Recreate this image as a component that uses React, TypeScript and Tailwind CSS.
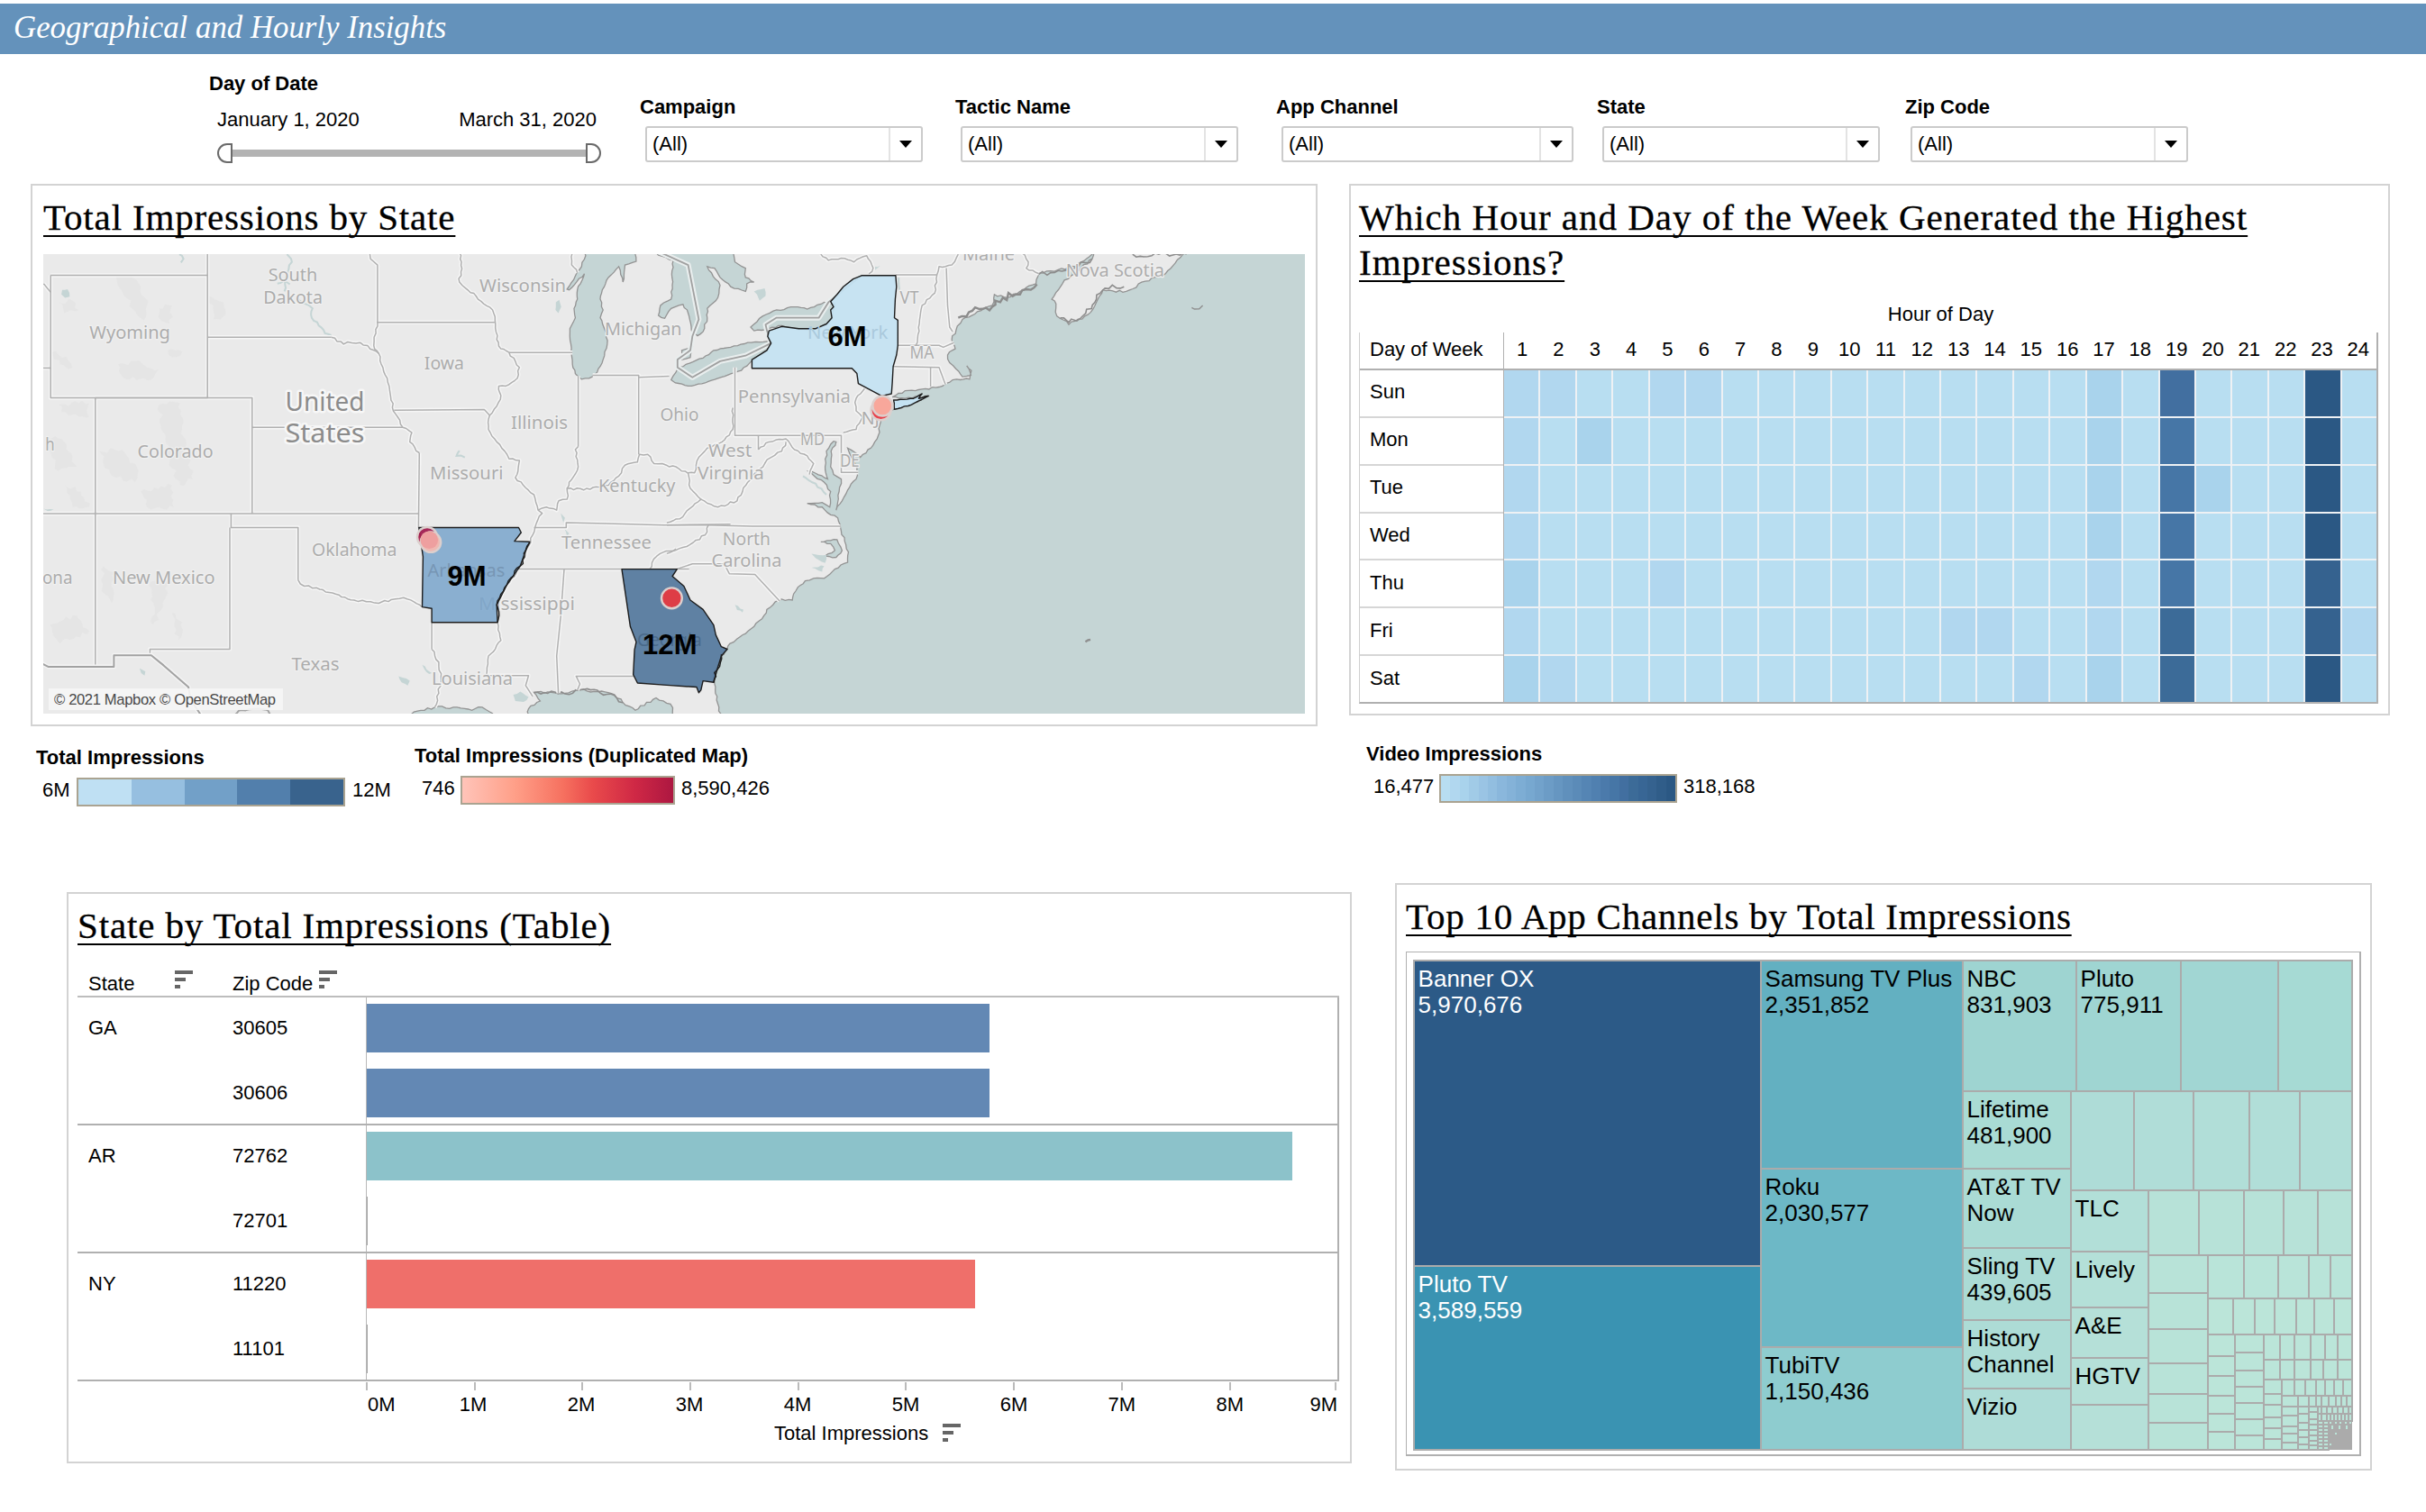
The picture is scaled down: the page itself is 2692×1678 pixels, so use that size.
import React from "react";

const SANS = "font-['Liberation_Sans',Arial,sans-serif]";
const SERIF = "font-['Liberation_Serif','Times_New_Roman',serif]";

/* ---------- shared pieces ---------- */

function Title({ tracking, children }: { tracking: string; children: React.ReactNode }) {
  return (
    <h2
      className={`${SERIF} ${tracking} text-[41px] leading-[50px] text-black whitespace-nowrap underline decoration-2 underline-offset-[6px] [text-decoration-skip-ink:none] [-webkit-text-stroke:0.3px_black]`}
    >
      {children}
    </h2>
  );
}

function SortIcon() {
  return (
    <svg width="20" height="20" viewBox="0 0 20 20" fill="#666" shapeRendering="crispEdges">
      <rect width="20" height="4" />
      <rect y="8" width="12" height="4" />
      <rect y="16" width="6" height="4" />
    </svg>
  );
}

function Filter({ label, width, box }: { label: string; width: string; box: string }) {
  return (
    <div className={`${width} shrink-0 pt-[46px]`}>
      <div className="font-bold leading-[26px]">{label}</div>
      <div className={`${box} ml-1.5 mt-[8px] flex h-10 rounded-[3px] border-2 border-[#cbcbcb] bg-white`}>
        <span className="flex-1 pl-[6px] leading-[36px]">(All)</span>
        <span className="flex w-[36px] items-center justify-center border-l-2 border-[#e3e3e3]">
          <svg width="14" height="8" viewBox="0 0 14 8">
            <path d="M0 0h14L7 8z" />
          </svg>
        </span>
      </div>
    </div>
  );
}

/* ---------- map ---------- */

type Side = "L" | "R";
type Pt = [number, number];

const project = (side: Side, u: number, v: number): Pt =>
  side === "L" ? [u / 2.1778 - 18, v / 2.9037 - 12] : [u / 2.119 + 692, v / 2.9037 - 12];

const noise = (n: number) => {
  const s = Math.sin(n * 127.1 + 11.7) * 43758.5453;
  return (s - Math.floor(s)) * 2 - 1;
};

function outline(side: Side, text: string, rough = 0, closed = false) {
  const pts = text.trim().split(/\s+/).map((p) => {
    const [u, v] = p.split(",").map(Number);
    return project(side, u, v);
  });
  if (closed) pts.push(pts[0]);
  const out: Pt[] = [pts[0]];
  for (let i = 1; i < pts.length; i++) {
    const [ax, ay] = pts[i - 1];
    const [bx, by] = pts[i];
    const len = Math.hypot(bx - ax, by - ay);
    const steps = rough ? Math.max(1, Math.round(len / 4)) : 1;
    for (let k = 1; k <= steps; k++) {
      const t = k / steps;
      const edge = k === steps ? 0 : 1;
      const off = rough * noise(ax * 1.3 + ay * 0.7 + k * 3.1) * edge;
      out.push([ax + (bx - ax) * t - ((by - ay) / (len || 1)) * off, ay + (by - ay) * t + ((bx - ax) / (len || 1)) * off]);
    }
  }
  return "M" + out.map(([x, y]) => `${x.toFixed(1)},${y.toFixed(1)}`).join("L") + (closed ? "Z" : "");
}

const WATER: [Side, string, number][] = [
  ["R", "127,1530 118,1460 112,1420 110,1395 120,1360 128,1330 142,1308 148,1290 165,1275 185,1258 205,1235 228,1200 235,1180 255,1155 270,1147 295,1150 298,1130 308,1108 325,1088 345,1080 370,1080 395,1050 425,1028 427,995 418,960 408,915 402,885 385,875 365,850 330,838 365,835 383,850 385,800 370,770 333,735 378,760 372,720 375,670 392,638 398,640 386,670 385,720 392,745 410,760 405,800 398,860 412,830 425,795 445,760 447,735 440,700 425,660 455,690 485,650 497,620 503,575 505,545 535,535 575,520 617,492 560,500 530,495 560,475 600,470 640,463 655,452 672,440 690,440 712,438 716,410 705,395 715,425 695,430 680,405 665,385 660,360 678,340 670,310 680,280 695,245 730,220 765,200 770,165 800,175 830,155 868,130 875,95 920,85 960,75 1000,35 1010,-10 1540,-10 1540,1530", 1.2],
  ["L", "1345,20 1350,40 1335,85 1305,148 1310,150 1347,98 1330,150 1330,180 1322,210 1325,240 1312,275 1315,350 1318,390 1325,420 1340,438 1358,435 1378,415 1392,375 1402,325 1400,290 1385,240 1392,215 1385,180 1390,150 1405,110 1430,75 1440,125 1445,70 1472,58 1470,20", 0.8],
  ["R", "-40,20 -20,38 15,55 10,180 -15,200 -20,232 -5,242 10,210 38,197 50,225 60,290 72,298 85,285 95,240 95,210 120,175 125,135 95,75 112,80 125,110 150,140 185,155 188,130 205,125 185,110 185,80 160,60 155,20", 1],
  ["R", "35,345 60,335 55,368 35,375", 0.4],
  ["R", "10,440 25,405 45,390 85,370 110,345 150,335 190,320 245,318 235,345 200,378 175,410 120,435 90,450 50,460 20,450", 0.7],
  ["R", "197,270 225,235 250,218 300,205 330,212 370,190 395,195 388,245 375,262 355,275 310,278 270,265 240,275 205,282", 0.8],
  ["L", "925,1530 935,1510 985,1495 1030,1495 1075,1505 1100,1495 1118,1510 1135,1530", 1.5],
  ["L", "1212,1530 1212,1500 1240,1475 1225,1447 1300,1450 1335,1440 1380,1445 1420,1455 1440,1480 1470,1505 1520,1465 1555,1485 1560,1510 1565,1530", 1.5],
  ["R", "362,962 400,955 412,990 398,1012 372,1008 395,990 385,968", 0.8],
];

const PONDS: [Side, string][] = [
  ["L", "85,150 98,148 103,172 92,176 83,165"],
  ["L", "1278,190 1286,182 1291,205 1284,225 1277,215"],
  ["L", "1175,1455 1192,1445 1212,1462 1200,1478 1180,1475"],
  ["L", "955,1358 978,1385 972,1388 960,1372"],
  ["L", "898,1395 925,1410 920,1425 905,1415"],
  ["L", "272,1370 286,1380 284,1393 276,1385"],
  ["L", "1290,870 1300,885 1296,900"],
  ["L", "1298,918 1310,935 1305,945"],
  ["L", "40,855 64,858 50,863"],
  ["R", "205,155 230,145 232,170 218,185 212,165"],
  ["R", "160,1165 180,1180 178,1190 165,1182"],
  ["R", "340,1000 375,1005 372,1030 350,1015"],
  ["R", "340,1045 370,1040 365,1058"],
  ["R", "487,75 502,72 490,86"],
];

const RIVERS: [Side, string][] = [
  ["L", "628,35 640,60 632,85 625,110 622,155"],
  ["L", "605,130 620,122 635,132"],
  ["L", "655,180 672,195 690,210 688,240 705,265 720,290 735,296"],
  ["L", "1045,668 1038,685 1058,690"],
  ["L", "368,35 378,50 372,62"],
  ["R", "320,750 350,775 375,810"],
  ["R", "545,110 547,150"],
];

const STRAIGHT: [Side, string][] = [
  ["L", "57,103 436,103 436,498 57,498 57,103"],
  ["L", "436,30 436,103"],
  ["L", "40,130 57,158"],
  ["L", "30,402 57,402"],
  ["L", "165,1365 165,498 544,498 544,871"],
  ["L", "30,871 946,871"],
  ["L", "436,303 735,303"],
  ["L", "544,593 908,593"],
  ["L", "948,675 946,916"],
  ["L", "828,30 830,50 847,70 847,255"],
  ["L", "845,255 1130,255"],
  ["L", "887,538 1105,536 1118,555"],
  ["L", "1165,352 1318,352"],
  ["L", "1332,428 1332,655"],
  ["L", "1367,425 1478,425 1478,680"],
  ["L", "1478,432 1552,428"],
  ["L", "1225,916 1303,916 1303,900 1400,903 1540,908 1700,905"],
  ["L", "1180,1050 1600,1050"],
  ["L", "493,871 493,916 655,916 655,1085"],
  ["L", "490,916 490,1308 297,1308 297,1325"],
  ["L", "978,1222 978,1308"],
  ["L", "1110,1393 1212,1393 1205,1425 1222,1460"],
  ["L", "1298,1050 1290,1200 1280,1330 1284,1450"],
  ["L", "1330,1440 1336,1420 1327,1395 1470,1395"],
  ["R", "160,400 160,619 410,619 410,738 450,738"],
  ["R", "0,908 95,908 200,912 408,912"],
  ["R", "22,1050 60,1033 135,1033 147,1065 207,1067 265,1153"],
  ["R", "540,329 640,329 650,335 675,320"],
  ["R", "532,397 640,400 655,455"],
  ["R", "620,400 620,462"],
  ["R", "657,80 660,200 665,270 672,285"],
  ["R", "538,102 635,102"],
  ["R", "215,619 215,665"],
];

const WINDING: [Side, string][] = [
  ["L", "735,303 765,325 775,318 805,320 838,345 850,355 860,400 875,460 885,540 908,593 930,610 925,640 948,675"],
  ["L", "847,255 843,290 838,330 850,355"],
  ["L", "1045,30 1050,60 1045,125 1060,145 1085,170 1125,215 1132,260 1135,310 1145,340 1165,352 1190,400 1185,435 1165,455 1140,460 1145,490 1135,525 1118,555 1115,600 1135,640 1160,680 1165,695 1190,700 1180,755 1225,810 1235,860 1245,870 1230,905 1222,940 1212,975 1190,1045 1160,1100 1135,1170 1137,1222 1145,1280 1115,1330 1110,1393"],
  ["L", "1332,655 1325,665 1332,720 1310,770 1305,790"],
  ["L", "1235,860 1255,850 1280,860 1285,830 1305,825 1305,790 1345,795 1375,785 1405,780 1430,750 1445,715 1475,705 1480,680 1500,680 1515,710 1545,715 1568,720 1598,742"],
  ["L", "655,1085 670,1105 700,1110 730,1125 760,1140 790,1150 820,1155 850,1160 880,1148 910,1142 935,1155 955,1172"],
  ["L", "978,1308 995,1350 1000,1400 995,1450 985,1495"],
  ["L", "1505,1050 1510,1030 1530,1000 1568,985"],
  ["L", "1318,30 1316,70 1330,95"],
  ["R", "155,530 155,600 130,640 95,660 75,690 65,740 50,740 55,790 80,825 30,888 0,900"],
  ["R", "80,825 120,850 165,830 190,770 230,710 245,690 270,670 280,640"],
  ["R", "215,665 240,640 280,630 300,665 330,685 345,710 335,745"],
  ["R", "98,908 90,940 55,970 20,990 0,1000"],
  ["R", "465,468 445,500 445,540 460,560 445,600 415,610"],
  ["R", "635,102 630,160 600,200 585,330"],
  ["R", "635,102 640,75 670,70 685,35"],
  ["R", "362,35 380,55 410,48 440,60 470,40 485,80 475,98"],
  ["R", "830,20 850,60 845,80 875,98"],
];

const BORDERS: [Side, string][] = [
  ["R", "-30,20 50,70 75,245 60,300 55,345 25,375 25,400 60,432 125,380 185,362 245,322 235,280 232,262 257,240 357,240 380,190 458,104"],
];

const MEXICO = "30,1350 52,1365 210,1365 210,1328 300,1328 330,1360 360,1395 390,1430 395,1470 420,1520";

const RELIEF: string[] = [
  "215,110 250,105 275,140 290,200 285,260 262,220 235,170",
  "75,190 110,185 125,215 90,225",
  "320,210 350,200 345,260 325,250",
  "220,390 260,380 290,400 320,405 300,440 230,430",
  "60,350 95,365 110,400 80,390",
  "340,345 375,350 370,362 342,360",
  "75,520 150,515 150,560 100,555",
  "320,520 370,515 375,600 390,690 400,760 370,780 345,700 330,610",
  "175,670 230,665 265,720 260,770 200,740",
  "50,620 90,640 120,720 75,735 60,690",
  "90,780 130,800 150,850 110,850",
  "275,800 350,780 355,850 290,850",
  "185,1040 210,1060 205,1160 180,1120",
  "300,1090 345,1080 325,1180 305,1230",
  "55,1230 120,1200 150,1250 80,1290",
  "350,1190 375,1220 365,1280",
  "440,170 475,190 480,230 450,245",
];

const NY = "458,104 538,104 540,140 537,180 535,240 543,248 543,329 540,360 532,397 530,450 528,485 505,492 450,452 447,420 435,403 200,403 200,375 235,345 245,322 237,300 240,282 270,268 310,275 350,275 375,260 388,240 385,215 392,205 385,188 400,165 415,140 438,115";
const LONG_ISLAND = "533,505 580,500 600,485 592,500 615,492 575,520 535,535";
const AR = "947,916 1188,916 1194,932 1178,960 1215,962 1205,990 1192,1040 1160,1100 1135,1165 1137,1222 978,1222 978,1177 955,1172 957,1010";
const GA = "-106,1050 24,1050 13,1073 40,1105 55,1150 85,1180 110,1230 115,1262 128,1300 142,1308 128,1330 118,1375 110,1415 85,1410 80,1440 75,1448 70,1430 0,1424 -69,1417 -79,1390 -76,1310 -72,1285 -86,1235";
const NOVA_SCOTIA = "1015,-10 1000,50 950,105 930,130 905,180 915,195 917,235 945,262 990,230 1010,190 1025,150 1080,155 1140,112 1165,105 1190,72 1225,20 1230,-10";

// [text, left, right, baseline]
const LABELS: [string, number, number, number][] = [
  ["South", 249.7, 304.3, 30],
  ["Dakota", 244.2, 309.9, 54.5],
  ["Wisconsin", 484, 580, 41.7],
  ["Wyoming", 51.3, 140.9, 94],
  ["Michigan", 623, 708.5, 90],
  ["Iowa", 422.8, 466.9, 127.5],
  ["Illinois", 519, 582, 193.6],
  ["h", 2.2, 12.6, 217.7],
  ["Colorado", 104.6, 188.6, 225.6],
  ["Missouri", 429, 510.5, 249.7],
  ["Kentucky", 616, 701.5, 263.9],
  ["Tennessee", 575, 675, 327.2],
  ["Oklahoma", 298, 392.5, 335],
  ["ona", -1, 32.5, 365.5],
  ["New Mexico", 77, 190.5, 365.5],
  ["Mississippi", 483, 590, 395.4],
  ["Texas", 275.4, 328.7, 462],
  ["Louisiana", 431, 521, 478.4],
  ["Ohio", 684.5, 727.4, 185],
  ["Maine", 1020, 1078, 6.6],
  ["Nova Scotia", 1134.7, 1244, 24.5],
  ["VT", 950.6, 971.4, 55.2],
  ["MA", 961.5, 988.4, 115.8],
  ["Pennsylvania", 770.8, 895.9, 165],
  ["NJ", 907.7, 928, 188.8],
  ["MD", 840, 867, 212.2],
  ["DE", 884, 905.8, 236.3],
  ["West", 738, 786.4, 224.9],
  ["Virginia", 726, 800, 249.7],
  ["North", 753.8, 807, 322.7],
  ["Carolina", 741.6, 819.4, 347.2],
];

// Names of the highlighted states, faint over their fills.
const STATE_LABELS: [string, number, number, number, string][] = [
  ["Arkansas", 426.5, 512.3, 358, "#7796b4"],
  ["Georgia", 659, 730.7, 435, "#4a6a8a"],
  ["New York", 848, 937.4, 93.7, "#aac9dc"],
];

function UsMap() {
  return (
    <svg width="1400" height="510" viewBox="0 0 1400 510" className="block overflow-hidden">
      <rect width="1400" height="510" fill="#eaeaea" />
      {RELIEF.map((p) => (
        <path key={p} d={outline("L", p, 3, true)} fill="#e5e5e5" />
      ))}
      {WATER.map(([s, p, r]) => (
        <path key={p} d={outline(s, p, r, true)} fill="#c5d5d5" stroke="#939393" strokeWidth="1.3" />
      ))}
      <path d={outline("R", NOVA_SCOTIA, 1.6, true)} fill="#eaeaea" stroke="#939393" strokeWidth="1.3" />
      <path d={outline("R", "685,240 710,222 735,212 765,205 772,185 790,175 820,165 845,148 870,132", 4)} fill="none" stroke="#8c8c8c" strokeWidth="2.4" />
      <path d={outline("R", "925,240 945,255 985,225 1010,180 1030,145 1075,140", 3)} fill="none" stroke="#8c8c8c" strokeWidth="1.6" />
      <path d={outline("R", "875,100 920,88 960,78 1000,50", 3)} fill="none" stroke="#8c8c8c" strokeWidth="1.6" />
      <path d={outline("R", "1095,35 1140,40 1190,38 1222,35", 3)} fill="none" stroke="#8c8c8c" strokeWidth="1.6" />
      <path d={outline("L", "1225,1448 1300,1452 1345,1438 1410,1452 1440,1480", 2.5)} fill="none" stroke="#8c8c8c" strokeWidth="1.6" />
      {PONDS.map(([s, p]) => (
        <path key={p} d={outline(s, p, 1, true)} fill="#c5d5d5" />
      ))}
      {RIVERS.map(([s, p]) => (
        <path key={p} d={outline(s, p, 1.4)} fill="none" stroke="#c5d5d5" strokeWidth="2" />
      ))}
      <g fill="none" strokeLinejoin="round">
        <g stroke="#f6f6f6" strokeWidth="4.4">
          {STRAIGHT.map(([s, p]) => <path key={p} d={outline(s, p)} />)}
          {WINDING.map(([s, p]) => <path key={p} d={outline(s, p, 1.3)} />)}
        </g>
        <g stroke="#b0b0b0" strokeWidth="1.5">
          {STRAIGHT.map(([s, p]) => <path key={p} d={outline(s, p)} />)}
          {WINDING.map(([s, p]) => <path key={p} d={outline(s, p, 1.3)} />)}
        </g>
        {BORDERS.map(([s, p]) => (
          <g key={p}>
            <path d={outline(s, p)} stroke="#e9eeee" strokeWidth="6" />
            <path d={outline(s, p)} stroke="#a0a0a0" strokeWidth="1.8" />
          </g>
        ))}
        <path d={outline("L", MEXICO)} stroke="#f4f4f4" strokeWidth="5" />
        <path d={outline("L", MEXICO)} stroke="#a2a2a2" strokeWidth="2" />
        <path d={outline("L", "502,1520 512,1506 560,1500 582,1505 588,1520", 0.6)} stroke="#a2a2a2" strokeWidth="2" />
        <path d={outline("R", "1234,207 1240,212 1252,211 1260,200", 0.3)} stroke="#8f8f8f" strokeWidth="1.4" />
        <path d={outline("R", "984,1284 990,1279 996,1277", 0.3)} stroke="#8f8f8f" strokeWidth="2.4" />
      </g>

      <g fontFamily="'Noto Sans','Open Sans',sans-serif" fill="#acacac" stroke="#f0f0f0" strokeWidth="2.6" strokeLinejoin="round" paintOrder="stroke">
        <g fontSize="20.5">
          {LABELS.map(([t, x1, x2, y]) => (
            <text key={t} x={x1} y={y} textLength={x2 - x1} lengthAdjust="spacingAndGlyphs">{t}</text>
          ))}
        </g>
        <g fontSize="29" fill="#8b8b8b" strokeWidth="5" stroke="#f7f7f7">
          <text x="268.5" y="174" textLength="88" lengthAdjust="spacingAndGlyphs">United</text>
          <text x="268.5" y="209" textLength="88" lengthAdjust="spacingAndGlyphs">States</text>
        </g>
      </g>

      <g stroke="#1d1d1d" strokeWidth="1.4" strokeLinejoin="round">
        <path d={outline("R", NY, 0, true)} fill="#c4e2f2" fillOpacity="0.93" />
        <path d={outline("R", LONG_ISLAND, 0.5, true)} fill="#c4e2f2" />
        <path d={outline("L", AR, 0, true)} fill="#79a5cb" fillOpacity="0.85" />
        <path d={outline("L", "1215,965 1205,990 1192,1040 1160,1100 1135,1165 1137,1222", 2.4)} fill="none" />
        <path d={outline("R", GA, 0, true)} fill="#52779c" fillOpacity="0.92" />
        <path d={outline("R", "128,1325 118,1375 110,1415", 2.4)} fill="none" />
      </g>
      <g fontFamily="'Noto Sans','Open Sans',sans-serif" fontSize="20.5">
        {STATE_LABELS.map(([t, x1, x2, y, c]) => (
          <text key={t} x={x1} y={y} fill={c} textLength={x2 - x1} lengthAdjust="spacingAndGlyphs">{t}</text>
        ))}
      </g>

      <g stroke="#dccfcd" strokeWidth="2.4">
        <circle cx="426" cy="314" r="11" fill="#a8194b" fillOpacity="0.9" />
        <circle cx="430" cy="319.7" r="11.2" fill="#f3b8b1" fillOpacity="0.97" />
        <circle cx="428.3" cy="317.3" r="9.8" fill="#ee9f9f" stroke="none" />
        <circle cx="697.4" cy="381.8" r="11.4" fill="#de3d46" />
        <circle cx="929.4" cy="173.3" r="11" fill="#e8434c" />
        <circle cx="931.3" cy="168.5" r="11" fill="#f8a79b" />
      </g>

      <g fontFamily="'Liberation Sans',Arial,sans-serif" fontWeight="bold" fontSize="31">
        <text x="448.5" y="368" textLength="43">9M</text>
        <text x="665" y="444" textLength="60.5">12M</text>
        <text x="870.5" y="101.8" textLength="43">6M</text>
      </g>
      <rect x="6" y="482" width="260" height="24" fill="#f6f6f6" fillOpacity="0.9" />
      <text x="12" y="500.4" fontSize="16.6" fill="#4a4a4a" fontFamily="'Liberation Sans',Arial,sans-serif" textLength="246">
        © 2021 Mapbox © OpenStreetMap
      </text>
    </svg>
  );
}

/* ---------- heat map ---------- */

const BASE = "#b8def1";
const MID = "#b1d7ef";
const WARM = "#a9d3ec";
const DEEP = "#2b5884";
const HEAT: { day: string; cells: Record<number, string> }[] = [
  { day: "Sun", cells: { 1: MID, 2: MID, 5: MID, 6: MID, 17: WARM, 19: "#426fa0", 23: DEEP } },
  { day: "Mon", cells: { 1: MID, 3: WARM, 17: WARM, 19: "#4676a6", 23: DEEP } },
  { day: "Tue", cells: { 1: MID, 17: WARM, 19: "#4676a6", 20: WARM, 23: DEEP } },
  { day: "Wed", cells: { 1: MID, 17: WARM, 19: "#4676a6", 23: DEEP } },
  { day: "Thu", cells: { 1: WARM, 5: MID, 17: MID, 19: "#4676a6", 23: "#35628f" } },
  { day: "Fri", cells: { 1: MID, 13: MID, 14: MID, 17: MID, 19: "#3c6b98", 23: "#35628f", 24: MID } },
  { day: "Sat", cells: { 1: WARM, 2: MID, 15: MID, 17: WARM, 19: "#3c6b98", 23: DEEP } },
];
const HOURS = Array.from({ length: 24 }, (_, i) => i + 1);

function HeatMap() {
  return (
    <div className="mt-[20px] w-[1131px]">
      <div className="ml-[160px] text-center leading-[26px]">Hour of Day</div>
      <div className="mt-[7px] flex h-[412px] border-r-2 border-b-2 border-l border-[#b0b0b0] border-l-[#cfcfcf]">
        <div className="flex w-[160px] flex-col border-r border-[#b0b0b0]">
          <div className="h-[42px] shrink-0 border-b-2 border-[#b0b0b0] pl-[11px] leading-[38px]">Day of Week</div>
          {HEAT.map((r, i) => (
            <div
              key={r.day}
              className={`flex flex-1 items-center border-[#d6d6d6] pb-[3px] pl-[11px] ${i < 6 ? "border-b-2" : ""}`}
            >
              {r.day}
            </div>
          ))}
        </div>
        <div className="flex flex-1 flex-col">
          <div className="grid h-[42px] shrink-0 grid-cols-[repeat(24,minmax(0,1fr))] border-b-2 border-[#b0b0b0] text-center leading-[38px]">
            {HOURS.map((h) => (
              <span key={h} className="-mr-2 -ml-2">{h}</span>
            ))}
          </div>
          <div className="grid flex-1 grid-cols-[repeat(24,minmax(0,1fr))] grid-rows-7 gap-[2px] bg-[#eef1f4]">
            {HEAT.flatMap((r) =>
              HOURS.map((h) => <div key={`${r.day}${h}`} style={{ backgroundColor: r.cells[h] ?? BASE }} />),
            )}
          </div>
        </div>
      </div>
    </div>
  );
}

/* ---------- legends ---------- */

const VIDEO = [
  "#b8def1", "#b1d7ef", "#a9d3ec", "#a1cbe7", "#9ac4e4", "#92bee0", "#8ab7dc", "#84b2d8", "#7dadd4", "#77a8d0", "#72a2cb", "#6c9cc6", "#6696c1",
  "#6090bc", "#5b8bb8", "#5585b4", "#5080b0", "#4b7aab", "#4676a6", "#426fa0", "#3c6b98", "#386695", "#35628f", "#305d89", "#2b5884",
];
const STEPS = ["#bfe0f3", "#96bfe0", "#72a0c8", "#527fac", "#39638d"];

function Legends() {
  return (
    <div className="flex h-[174px] pl-10">
      <div className="w-[420px] pt-[22px]">
        <div className="font-bold leading-[26px]">Total Impressions</div>
        <div className="mt-[9px] flex pl-[7px] leading-[28px]">
          <span className="w-[38px]">6M</span>
          <div className="flex h-8 w-[298px] border-2 border-[#aaa391]">
            {STEPS.map((c) => (
              <div key={c} className="flex-1" style={{ backgroundColor: c }} />
            ))}
          </div>
          <span className="ml-2">12M</span>
        </div>
      </div>
      <div className="w-[1056px] pt-[20px]">
        <div className="font-bold leading-[26px]">Total Impressions (Duplicated Map)</div>
        <div className="mt-[9px] flex pl-[8px] leading-[28px]">
          <span className="w-[43px]">746</span>
          <div className="h-8 w-[238px] border-2 border-[#aaa391] bg-[linear-gradient(90deg,#ffc4b9,#ff9f88_25%,#f6705f_48%,#e94a4b_62%,#cf2845_82%,#ad1741)]" />
          <span className="ml-[7px]">8,590,426</span>
        </div>
      </div>
      <div className="pt-[18px]">
        <div className="font-bold leading-[26px]">Video Impressions</div>
        <div className="mt-[9px] flex pl-[8px] leading-[28px]">
          <span className="w-[73px]">16,477</span>
          <div className="flex h-8 w-[264px] border-2 border-[#aaa391]">
            {VIDEO.map((c) => (
              <div key={c} className="flex-1" style={{ backgroundColor: c }} />
            ))}
          </div>
          <span className="ml-[7px]">318,168</span>
        </div>
      </div>
    </div>
  );
}

/* ---------- bar table ---------- */

const GROUPS = [
  { state: "GA", color: "#6388b4", rows: [["30605", 691], ["30606", 691]] as [string, number][] },
  { state: "AR", color: "#8cc2ca", rows: [["72762", 1027], ["72701", 1]] as [string, number][] },
  { state: "NY", color: "#ef6f6a", rows: [["11220", 675], ["11101", 1]] as [string, number][] },
];

function BarTable() {
  return (
    <div className="w-[1400px]">
      <div className="flex h-[55px] border-b-2 border-[#bdbdbd] leading-[26px]">
        <div className="flex w-[160px] pt-[27px] pl-3">
          <span className="w-[96px]">State</span>
          <span className="-mt-[2px]"><SortIcon /></span>
        </div>
        <div className="flex w-[160px] pt-[27px] pl-3">
          <span className="w-[96px] whitespace-nowrap">Zip Code</span>
          <span className="-mt-[2px]"><SortIcon /></span>
        </div>
      </div>
      {GROUPS.map((g) => (
        <div key={g.state} className="flex h-[142px] border-r-2 border-b-2 border-[#b0b0b0] leading-[26px]">
          <div className="w-[160px] pt-[21px] pl-3">{g.state}</div>
          <div className="flex w-[160px] flex-col gap-[46px] pt-[21px] pl-3">
            {g.rows.map(([zip]) => (
              <span key={zip}>{zip}</span>
            ))}
          </div>
          <div className="flex flex-1 flex-col gap-[18px] border-l border-[#b8b8b8] pt-[7px]">
            {g.rows.map(([zip, w]) => (
              <div key={zip} className="h-[54px]" style={{ width: w, backgroundColor: w > 1 ? g.color : "#a5a5a5" }} />
            ))}
          </div>
        </div>
      ))}
      <div className="ml-[320px] flex h-[10px] w-[1080px] pt-[1px]">
        {Array.from({ length: 9 }, (_, i) => (
          <div key={i} className={`w-[119.7px] border-l-2 border-[#bbb] ${i === 8 ? "border-r-2" : ""}`} />
        ))}
      </div>
      <div className="mt-[3px] ml-[320px] flex w-[1080px] justify-between leading-[26px]">
        <span className="w-[59px] pl-[2px]">0M</span>
        {[1, 2, 3, 4, 5, 6, 7, 8].map((n) => (
          <span key={n} className="w-[119.6px] text-center">{n}M</span>
        ))}
        <span className="w-[61px] pr-[2px] text-right">9M</span>
      </div>
      <div className="mt-[6px] flex pl-[773px] leading-[26px]">
        <span className="w-[187px]">Total Impressions</span>
        <span className="pt-[2px]"><SortIcon /></span>
      </div>
    </div>
  );
}

/* ---------- tree map ---------- */

const TX = 1569;
const TY = 1065;
const TREE: { x: number; y: number; w: number; h: number; c: string }[] = [];
const across = (xs: number[], y1: number, y2: number, colors: string[]) =>
  xs.slice(1).forEach((x, i) => TREE.push({ x: xs[i], y: y1, w: x - xs[i], h: y2 - y1, c: colors[Math.min(i, colors.length - 1)] }));
const down = (ys: number[], x1: number, x2: number, colors: string[]) =>
  ys.slice(1).forEach((y, i) => TREE.push({ x: x1, y: ys[i], w: x2 - x1, h: y - ys[i], c: colors[Math.min(i, colors.length - 1)] }));

const S = "#bbe5d9";
down([1066, 1405, 1609], 1570, 1955, ["#2c5a87", "#3a93b2"]);
down([1066, 1297, 1495, 1609], 1955, 2179, ["#63b0c1", "#6db8c6", "#8ecccf"]);
across([2179, 2305, 2421, 2529, 2611], 1066, 1211, ["#9ed4d1", "#9fd5d2", "#a1d6d3", "#a6dad4"]);
down([1211, 1297, 1385, 1465, 1541, 1609], 2179, 2299, ["#a9dbd4", "#aadbd5", "#abdbd5", "#addcd6", "#aedcd7"]);
across([2299, 2369, 2435, 2497, 2553, 2611], 1211, 1321, ["#aedcd7", "#b0ddd8", "#b1ded8"]);
down([1321, 1389, 1451, 1507, 1559, 1609], 2299, 2385, ["#b2dfd8", "#b4e0d8", "#b5e0d8"]);
across([2385, 2441, 2491, 2535, 2573, 2611], 1321, 1393, ["#b7e2d8"]);
down([1393, 1435, 1475, 1513, 1547, 1579, 1609], 2385, 2451, ["#b8e3d8"]);
across([2451, 2491, 2529, 2563, 2587, 2611], 1393, 1441, ["#b9e4d9"]);
across([2451, 2479, 2503, 2525, 2549, 2569, 2591, 2611], 1441, 1481, [S]);
down([1481, 1505, 1527, 1549, 1569, 1589, 1609], 2451, 2481, [S]);
down([1481, 1501, 1521, 1539, 1557, 1575, 1593, 1609], 2481, 2513, [S]);
across([2513, 2531, 2547, 2565, 2581, 2595, 2611], 1481, 1509, [S]);
across([2513, 2531, 2547, 2565, 2579, 2595, 2611], 1509, 1531, [S]);
down([1531, 1547, 1559, 1573, 1585, 1597, 1609], 2513, 2533, [S]);
across([2533, 2547, 2559, 2571, 2581, 2591, 2601, 2611], 1531, 1549, [S]);
down([1549, 1561, 1571, 1583, 1591, 1601, 1609], 2533, 2551, [S]);
across([2551, 2563, 2571, 2577, 2585, 2593, 2599, 2605, 2611], 1549, 1561, [S]);
down([1561, 1569, 1579, 1587, 1595, 1603, 1609], 2551, 2563, [S]);
down([1561, 1567, 1575, 1581, 1587, 1593, 1599, 1604, 1609], 2563, 2573, [S]);
across([2573, 2577, 2583, 2589, 2595, 2601, 2607, 2611], 1561, 1569, [S]);
across([2573, 2577, 2583, 2587, 2591, 2595, 2599, 2603, 2607, 2611], 1569, 1577, [S]);
down([1577, 1581, 1585, 1589, 1593, 1597, 1601, 1605, 1609], 2573, 2579, [S]);
down([1577, 1581, 1585, 1589, 1593, 1597, 1601, 1605, 1609], 2579, 2585, [S]);

const SPECKS: [number, number, number, number][] = [
  [2586, 1578, 2, 2], [2592, 1578, 2, 2], [2597, 1578, 2, 2], [2603, 1578, 2, 2], [2608, 1578, 2, 2],
  [2588, 1582, 2, 4], [2596, 1582, 2, 4], [2604, 1582, 2, 4], [2592, 1590, 2, 2], [2586, 1602, 2, 2],
];

// [left edge, top edge, lines, white text]
const TREE_TEXT: [number, number, string[], boolean][] = [
  [1570, 1066, ["Banner OX", "5,970,676"], true],
  [1570, 1405, ["Pluto TV", "3,589,559"], true],
  [1955, 1066, ["Samsung TV Plus", "2,351,852"], false],
  [1955, 1297, ["Roku", "2,030,577"], false],
  [1955, 1495, ["TubiTV", "1,150,436"], false],
  [2179, 1066, ["NBC", "831,903"], false],
  [2305, 1066, ["Pluto", "775,911"], false],
  [2179, 1211, ["Lifetime", "481,900"], false],
  [2179, 1297, ["AT&T TV", "Now"], false],
  [2179, 1385, ["Sling TV", "439,605"], false],
  [2179, 1465, ["History", "Channel"], false],
  [2179, 1541, ["Vizio"], false],
  [2299, 1321, ["TLC"], false],
  [2299, 1389, ["Lively"], false],
  [2299, 1451, ["A&E"], false],
  [2299, 1507, ["HGTV"], false],
];

function TreeMap() {
  return (
    <svg width="1043" height="545" viewBox="0 0 1043 545" className="block">
      <g transform={`translate(${-TX} ${-TY})`}>
        <rect x="2584" y="1577" width="27" height="32" fill="#ababab" />
        <g stroke="#ababab" strokeWidth="2" shapeRendering="crispEdges">
          {TREE.map((t) => (
            <rect key={`${t.x}-${t.y}`} x={t.x} y={t.y} width={t.w} height={t.h} fill={t.c} />
          ))}
        </g>
        {SPECKS.map(([x, y, w, h]) => (
          <rect key={`${x}-${y}`} x={x} y={y} width={w} height={h} fill={S} />
        ))}
        <g fontFamily="'Liberation Sans',Arial,sans-serif" fontSize="26">
          {TREE_TEXT.map(([x, y, lines, light]) =>
            lines.map((l, i) => (
              <text key={`${x}${y}${l}`} x={x + 4.6} y={y + 28.6 + i * 29} fill={light ? "#fff" : "#000"}>
                {l}
              </text>
            )),
          )}
        </g>
      </g>
    </svg>
  );
}

/* ---------- page ---------- */

export default function App() {
  return (
    <div className={`${SANS} flex h-[1678px] w-[2692px] flex-col overflow-hidden bg-white text-[22px] text-black`}>
      <header className="mt-1 h-14 shrink-0 bg-[#6492bb] pl-[15px]">
        <h1 className={`${SERIF} text-[34.8px] leading-[54px] text-white italic`}>Geographical and Hourly Insights</h1>
      </header>

      <div className="flex h-36 shrink-0 pl-[232px]">
        <div className="w-[478px] shrink-0 pt-[20px]">
          <div className="font-bold leading-[26px]">Day of Date</div>
          <div className="mt-[14px] flex w-[430px] justify-between pl-[9px] leading-[26px]">
            <span>January 1, 2020</span>
            <span>March 31, 2020</span>
          </div>
          <div className="mt-[13px] ml-[9px] flex w-[426px] items-center">
            <div className="h-[22px] w-[17px] rounded-l-[12px] border-2 border-[#6a6a6a] bg-white" />
            <div className="h-2 flex-1 bg-[#b3b3b3]" />
            <div className="h-[22px] w-[17px] rounded-r-[12px] border-2 border-[#6a6a6a] bg-white" />
          </div>
        </div>
        <Filter label="Campaign" width="w-[350px]" box="w-[308px]" />
        <Filter label="Tactic Name" width="w-[356px]" box="w-[308px]" />
        <Filter label="App Channel" width="w-[356px]" box="w-[324px]" />
        <Filter label="State" width="w-[342px]" box="w-[308px]" />
        <Filter label="Zip Code" width="w-[342px]" box="w-[308px]" />
      </div>

      <div className="flex h-[602px] shrink-0 items-start gap-[35px] pl-[34px]">
        <section className="h-[602px] w-[1428px] border-2 border-[#d3d3d3] pt-[10px] pl-3">
          <Title tracking="tracking-[0.84px]">Total Impressions by State</Title>
          <div className="mt-4">
            <UsMap />
          </div>
        </section>
        <section className="h-[590px] w-[1155px] border-2 border-[#d3d3d3] pt-[10px] pl-[9px]">
          <Title tracking="tracking-[0.98px]">
            Which Hour and Day of the Week Generated the Highest
            <br />
            Impressions?
          </Title>
          <HeatMap />
        </section>
      </div>

      <Legends />

      <div className="flex items-start pl-[74px]">
        <section className="mt-[10px] h-[634px] w-[1426px] border-2 border-[#d3d3d3] pt-[10px] pl-[10px]">
          <Title tracking="tracking-[0.86px]">State by Total Impressions (Table)</Title>
          <BarTable />
        </section>
        <section className="ml-[48px] h-[652px] w-[1084px] border-2 border-[#d3d3d3] pt-[10px] pl-[10px]">
          <Title tracking="tracking-[0.75px]">Top 10 App Channels by Total Impressions</Title>
          <div className="mt-[14px] h-[560px] w-[1060px] border border-r-2 border-b-2 border-[#b0b0b0] pt-[8px] pl-[7px]">
            <TreeMap />
          </div>
        </section>
      </div>
    </div>
  );
}
